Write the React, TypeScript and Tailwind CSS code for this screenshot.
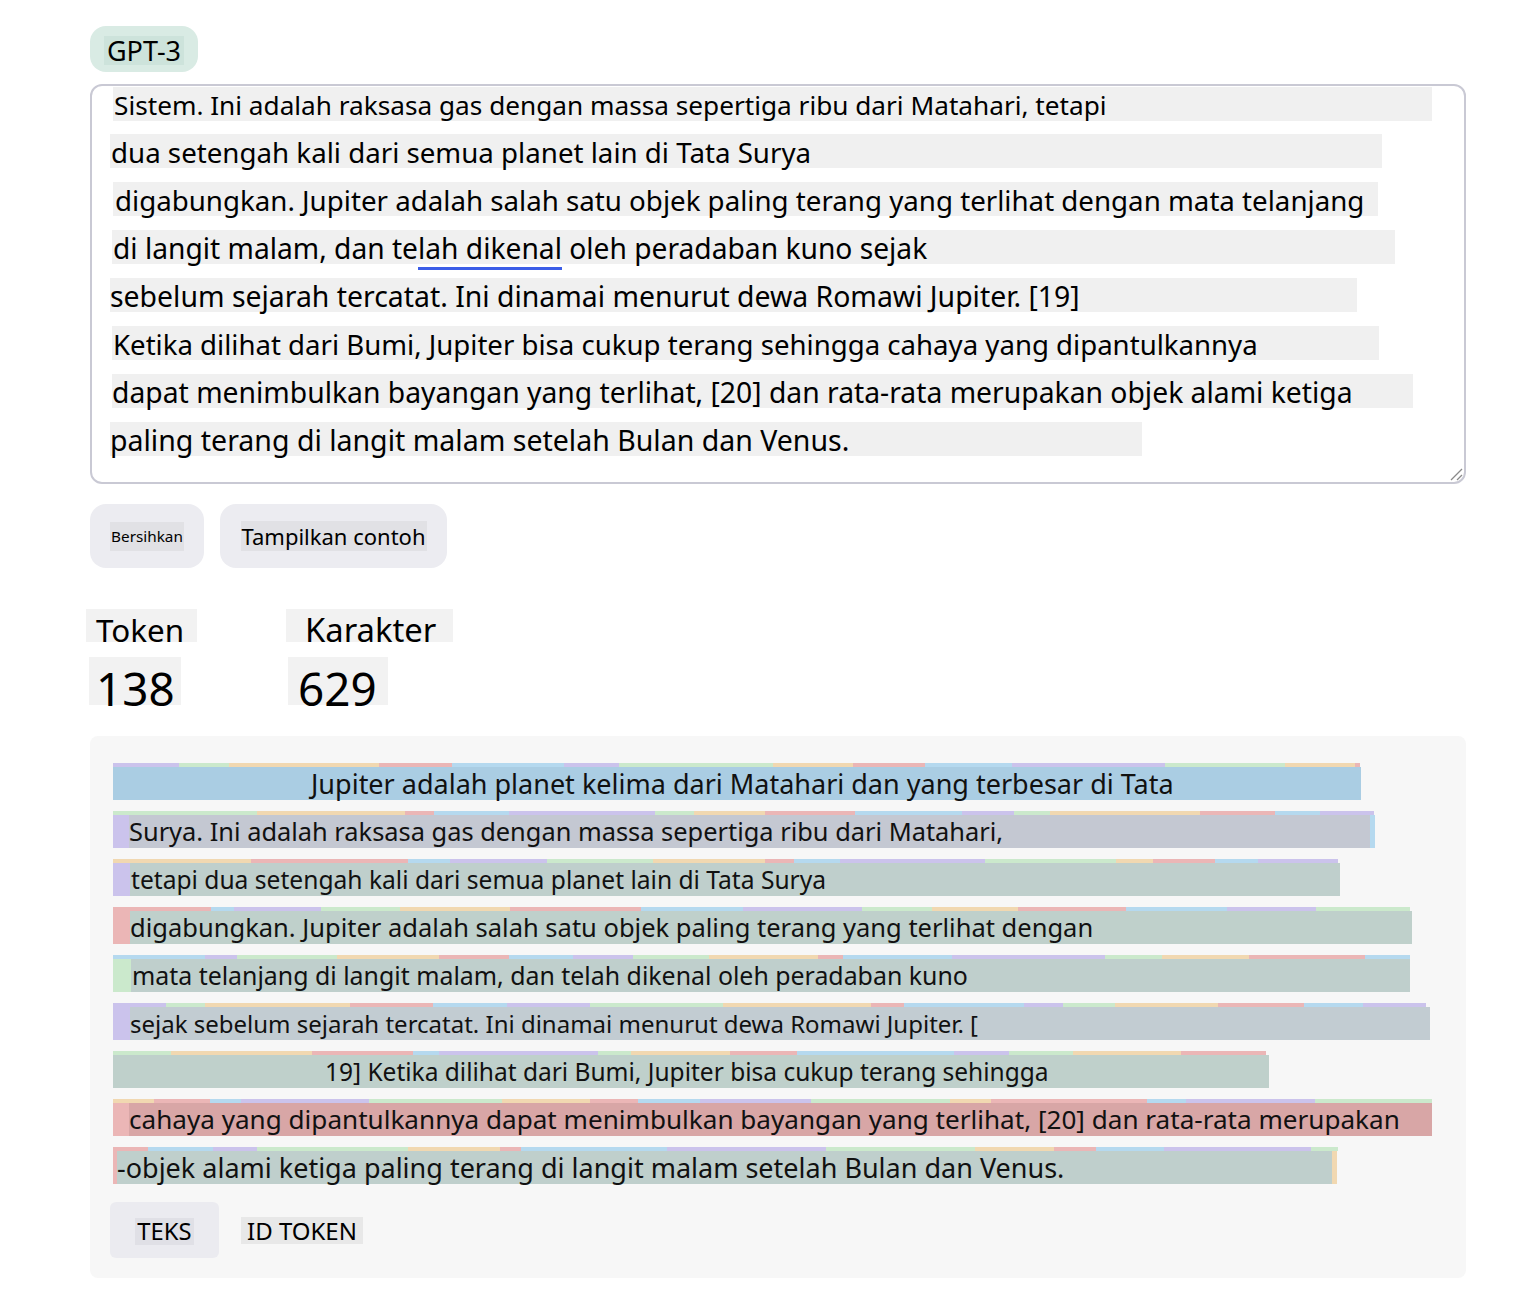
import React from 'react';

const palette = ['#cbc3ec', '#cbe9cc', '#f1d8b1', '#ebb6b6', '#b5d9ef'];

// deterministic pseudo-random widths for the thin token strips
const makeSegments = (total: number, seed: number, start: number) => {
  const out: { w: number; c: string }[] = [];
  let s = seed;
  let used = 0;
  let i = start;
  while (used < total) {
    s = (s * 9301 + 49297) % 233280;
    const w = Math.min(total - used, 20 + Math.floor((s / 233280) * 140));
    out.push({ w, c: palette[i % palette.length] });
    used += w;
    i++;
  }
  return out;
};

const inputLines = [
  { text: 'Sistem. Ini adalah raksasa gas dengan massa sepertiga ribu dari Matahari, tetapi', ml: 'ml-[21px]', w: 'w-[1319px]', pl: 'pl-[1px]', mt: 'mt-[1px]', fs: 'text-[26.2px]' },
  { text: 'dua setengah kali dari semua planet lain di Tata Surya', ml: 'ml-[18px]', w: 'w-[1272px]', pl: 'pl-[1px]', mt: 'mt-[13px]', fs: 'text-[27.7px]' },
  { text: 'digabungkan. Jupiter adalah salah satu objek paling terang yang terlihat dengan mata telanjang', ml: 'ml-[21px]', w: 'w-[1265px]', pl: 'pl-[2px]', mt: 'mt-[14px]', fs: 'text-[27.7px]' },
  { text: 'underline', ml: 'ml-[20px]', w: 'w-[1283px]', pl: 'pl-[1px]', mt: 'mt-[14px]', fs: 'text-[28.2px]' },
  { text: 'sebelum sejarah tercatat. Ini dinamai menurut dewa Romawi Jupiter. [19]', ml: 'ml-[18px]', w: 'w-[1247px]', pl: 'pl-[0px]', mt: 'mt-[14px]', fs: 'text-[28.4px]' },
  { text: 'Ketika dilihat dari Bumi, Jupiter bisa cukup terang sehingga cahaya yang dipantulkannya', ml: 'ml-[20px]', w: 'w-[1267px]', pl: 'pl-[1px]', mt: 'mt-[14px]', fs: 'text-[27.6px]' },
  { text: 'dapat menimbulkan bayangan yang terlihat, [20] dan rata-rata merupakan objek alami ketiga', ml: 'ml-[20px]', w: 'w-[1301px]', pl: 'pl-[0px]', mt: 'mt-[14px]', fs: 'text-[28.3px]' },
  { text: 'paling terang di langit malam setelah Bulan dan Venus.', ml: 'ml-[18px]', w: 'w-[1032px]', pl: 'pl-[0px]', mt: 'mt-[14px]', fs: 'text-[28.5px]' },
];

type Row = {
  text: string;
  strip: number;
  stripe?: string;
  stripeW?: string;
  block: string;
  color: string;
  pl: string;
  fs: string;
  edge?: string;
  seed: number;
};

const rows: Row[] = [
  { text: 'Jupiter adalah planet kelima dari Matahari dan yang terbesar di Tata', strip: 1247, block: 'w-[1248px]', color: 'bg-[#aacde3]', pl: 'pl-[198px]', fs: 'text-[27px]', seed: 3 },
  { text: 'Surya. Ini adalah raksasa gas dengan massa sepertiga ribu dari Matahari,', strip: 1261, stripe: 'bg-[#cbc3ec]', stripeW: 'w-[16px]', block: 'w-[1241px]', color: 'bg-[#c4c8d2]', pl: 'pl-[0px]', fs: 'text-[25.4px]', edge: 'bg-[#b5d9ef]', seed: 17 },
  { text: 'tetapi dua setengah kali dari semua planet lain di Tata Surya', strip: 1225, stripe: 'bg-[#cbc3ec]', stripeW: 'w-[17px]', block: 'w-[1210px]', color: 'bg-[#bfcfcc]', pl: 'pl-[1px]', fs: 'text-[24.6px]', seed: 41 },
  { text: 'digabungkan. Jupiter adalah salah satu objek paling terang yang terlihat dengan', strip: 1297, stripe: 'bg-[#ebb6b6]', stripeW: 'w-[17px]', block: 'w-[1282px]', color: 'bg-[#bfd0cb]', pl: 'pl-[0px]', fs: 'text-[25.5px]', seed: 59 },
  { text: 'mata telanjang di langit malam, dan telah dikenal oleh peradaban kuno', strip: 1297, stripe: 'bg-[#cbe9cc]', stripeW: 'w-[18px]', block: 'w-[1279px]', color: 'bg-[#bfcfcc]', pl: 'pl-[1px]', fs: 'text-[24.9px]', seed: 83 },
  { text: 'sejak sebelum sejarah tercatat. Ini dinamai menurut dewa Romawi Jupiter. [', strip: 1313, stripe: 'bg-[#cbc3ec]', stripeW: 'w-[17px]', block: 'w-[1300px]', color: 'bg-[#c2ccd2]', pl: 'pl-[0px]', fs: 'text-[24px]', seed: 101 },
  { text: '19] Ketika dilihat dari Bumi, Jupiter bisa cukup terang sehingga', strip: 1153, block: 'w-[1156px]', color: 'bg-[#bfd0cb]', pl: 'pl-[212px]', fs: 'text-[24.5px]', seed: 127 },
  { text: 'cahaya yang dipantulkannya dapat menimbulkan bayangan yang terlihat, [20] dan rata-rata merupakan', strip: 1319, stripe: 'bg-[#ebb6b6]', stripeW: 'w-[16px]', block: 'w-[1303px]', color: 'bg-[#d8a6a6]', pl: 'pl-[0px]', fs: 'text-[26.1px]', seed: 149 },
  { text: '-objek alami ketiga paling terang di langit malam setelah Bulan dan Venus.', strip: 1225, stripe: 'bg-[#ebb6b6]', stripeW: 'w-[4px]', block: 'w-[1215px]', color: 'bg-[#bfcfcc]', pl: 'pl-[0px]', fs: 'text-[27px]', edge: 'bg-[#f1d8b1]', seed: 173 },
];

const TokenRow: React.FC<{ row: Row; idx: number }> = ({ row, idx }) => {
  const segs = makeSegments(row.strip, row.seed, idx);
  return (
    <div className="h-[48px]">
      <div className="flex h-[4px]">
        {segs.map((s, i) => (
          <div key={i} className="h-full" style={{ width: s.w, background: s.c }} />
        ))}
      </div>
      <div className="flex h-[33px]">
        {row.stripe && <div className={`${row.stripe} ${row.stripeW} h-full`} />}
        <div className={`${row.block} ${row.color} ${row.pl} ${row.fs} flex items-center whitespace-nowrap leading-[33px] text-[#111]`}>
          {row.text}
        </div>
        {row.edge && <div className={`${row.edge} w-[5px] h-full`} />}
      </div>
    </div>
  );
};

export default function App() {
  return (
    <div className="min-h-screen bg-white font-['Noto_Sans',_sans-serif] text-black">
      <div className="ml-[90px] w-[1376px] pt-[26px]">
        {/* model pill */}
        <div className="flex h-[46px] w-[108px] items-center justify-center rounded-[16px] bg-[#d9ebe4] pt-[3px]">
          <span className="bg-[#cde3db] px-[3px] text-[27px] leading-[29px]">GPT-3</span>
        </div>

        {/* input box */}
        <div className="relative mt-[12px] h-[400px] rounded-[12px] border-2 border-[#c9c9d4]">
          {inputLines.map((l, i) => (
            <div key={i} className={`${l.mt} ${l.ml} ${l.w} ${l.pl} ${l.fs} h-[34px] whitespace-nowrap bg-[#f0f0f0] leading-[36px]`}>
              {l.text === 'underline' ? (
                <>
                  di langit malam, dan te
                  <span className="border-b-[3px] border-[#3b5de7]">lah dikenal</span> oleh peradaban kuno sejak
                </>
              ) : (
                l.text
              )}
            </div>
          ))}
          <svg className="absolute bottom-[1px] right-[1px]" width="16" height="16" viewBox="0 0 16 16">
            <path d="M15 4 L4 15 M15 10 L10 15" stroke="#8a8a8a" strokeWidth="1.3" />
          </svg>
        </div>

        {/* buttons */}
        <div className="mt-[20px] flex gap-[16px]">
          <button className="flex h-[64px] w-[114px] items-center justify-center rounded-[16px] bg-[#ececf1]">
            <span className="bg-[#e1e1e5] px-[1px] text-[15.3px] leading-[29px]">Bersihkan</span>
          </button>
          <button className="flex h-[64px] w-[227px] items-center justify-center rounded-[16px] bg-[#ececf1]">
            <span className="bg-[#e1e1e5] px-[1px] text-[22px] leading-[30px]">Tampilkan contoh</span>
          </button>
        </div>

        {/* stats */}
        <div className="-ml-[4px] mt-[41px] flex">
          <div className="w-[200px]">
            <div className="h-[33px] w-[111px] bg-[#f2f2f2] pl-[10px] text-[31.4px] leading-[42px]">Token</div>
            <div className="ml-[3px] mt-[15px] h-[48px] w-[92px] bg-[#f2f2f2] pl-[7px] text-[45.8px] leading-[62px]">138</div>
          </div>
          <div>
            <div className="h-[33px] w-[167px] bg-[#f2f2f2] pl-[19px] text-[32.8px] leading-[42px]">Karakter</div>
            <div className="ml-[2px] mt-[15px] h-[48px] w-[100px] bg-[#f2f2f2] pl-[10px] text-[45.8px] leading-[62px]">629</div>
          </div>
        </div>

        {/* tokenized output */}
        <div className="mt-[31px] h-[542px] rounded-[8px] bg-[#f7f7f7] pl-[23px] pt-[27px]">
          {rows.map((r, i) => (
            <TokenRow key={i} row={r} idx={i} />
          ))}
          <div className="-ml-[3px] mt-[7px] flex items-center gap-[22px]">
            <button className="flex h-[56px] w-[109px] items-center justify-center rounded-[6px] bg-[#ebebf0] pt-[3px]">
              <span className="bg-[#e0e0e6] px-[2px] text-[23.8px] leading-[27px]">TEKS</span>
            </button>
            <span className="bg-[#e8e8e8] px-[6px] text-[24px] leading-[27px]">ID TOKEN</span>
          </div>
        </div>
      </div>
    </div>
  );
}
